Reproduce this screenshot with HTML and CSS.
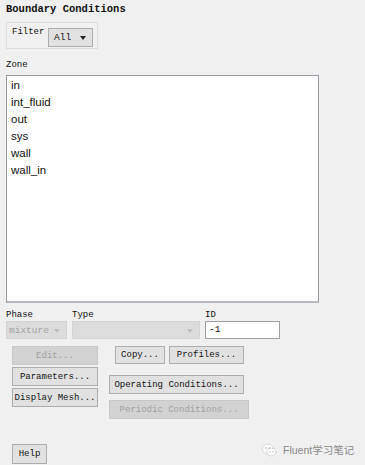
FILE: index.html
```html
<!DOCTYPE html>
<html lang="en">
<head>
    <meta charset="UTF-8">
    <title>Boundary Conditions</title>
    <link rel="stylesheet" href="styles.css">
</head>
<body>
    <div class="title">Boundary Conditions</div>

    <div class="filter-box">
        <span class="label">Filter</span>
        <div class="combo">All <span class="arrow"></span></div>
    </div>

    <div class="label zone-label">Zone</div>
    <div class="listbox">
        <div class="item">in</div>
        <div class="item">int_fluid</div>
        <div class="item">out</div>
        <div class="item">sys</div>
        <div class="item">wall</div>
        <div class="item">wall_in</div>
    </div>

    <div class="fields">
        <div class="field phase">
            <span class="label">Phase</span>
            <div class="combo disabled">mixture <span class="arrow"></span></div>
        </div>
        <div class="field type">
            <span class="label">Type</span>
            <div class="combo disabled"><span class="arrow"></span></div>
        </div>
        <div class="field id">
            <span class="label">ID</span>
            <div class="entry">-1</div>
        </div>
    </div>

    <div class="buttons">
        <div class="col-left">
            <button class="btn" disabled>Edit...</button>
            <button class="btn">Parameters...</button>
            <button class="btn">Display Mesh...</button>
        </div>
        <div class="col-mid">
            <div class="row">
                <button class="btn copy">Copy...</button>
                <button class="btn profiles">Profiles...</button>
            </div>
            <button class="btn operating">Operating Conditions...</button>
            <button class="btn periodic" disabled>Periodic Conditions...</button>
        </div>
    </div>

    <button class="btn help">Help</button>

    <div class="watermark">
        <svg width="15" height="14" viewBox="0 0 15 14">
            <ellipse cx="6" cy="6" rx="5.5" ry="4.8" fill="#fbfbfb" stroke="#c8c8c8" stroke-width="1" stroke-dasharray="1.5 1"/>
            <ellipse cx="9.5" cy="9" rx="4.6" ry="3.9" fill="#ffffff" stroke="#bdbdbd" stroke-width="1" stroke-dasharray="1.5 1"/>
            <circle cx="4" cy="5" r="0.8" fill="#b0b0b0"/>
            <circle cx="7.5" cy="5" r="0.8" fill="#b0b0b0"/>
            <circle cx="8" cy="8.6" r="0.6" fill="#b0b0b0"/>
            <circle cx="11" cy="8.6" r="0.6" fill="#b0b0b0"/>
        </svg>
        <span>Fluent学习笔记</span>
    </div>
</body>
</html>
```

FILE: styles.css
```css
* {
    box-sizing: border-box;
}
body {
    margin: 0;
    padding: 3px 0 0 6px;
    background-color: #f0f0f0;
    font-family: "Liberation Mono", "DejaVu Sans Mono", monospace;
    font-size: 9px;
    color: #111;
    position: relative;
    height: 465px;
    overflow: hidden;
}
.title {
    font-size: 10.5px;
    font-weight: bold;
    line-height: 12px;
}
.label {
    display: block;
    line-height: 12px;
}
.filter-box {
    display: flex;
    align-items: flex-start;
    width: 92px;
    height: 27px;
    margin-top: 7px;
    padding: 3px 0 0 5px;
    border: 1px solid #dcdcdc;
}
.filter-box .label {
    width: 36px;
}
.combo {
    position: relative;
    height: 19px;
    line-height: 18px;
    padding-left: 5px;
    background-color: #e1e1e1;
    border: 1px solid #adadad;
    font-size: 9.5px;
}
.filter-box .combo {
    width: 45px;
    margin-top: 2px;
}
.arrow {
    position: absolute;
    right: 6px;
    top: 7px;
    width: 0;
    height: 0;
    border-left: 3.5px solid transparent;
    border-right: 3.5px solid transparent;
    border-top: 4px solid #222;
}
.zone-label {
    margin-top: 10px;
}
.listbox {
    width: 313px;
    height: 228px;
    margin-top: 4px;
    padding: 1px 0 0 4px;
    background-color: #fff;
    border: 1px solid #9a9aa2;
    border-bottom: 2px solid #b8b8c0;
    font-family: "Liberation Sans", Arial, sans-serif;
    font-size: 11.5px;
}
.item {
    height: 17px;
    line-height: 17px;
}
.fields {
    display: flex;
    margin-top: 6px;
}
.field .label {
    height: 12px;
}
.combo.disabled {
    color: #a3a3a3;
    background-color: #dcdcdc;
    border-color: #d4d4d4;
    height: 18px;
    padding-left: 2px;
}
.combo.disabled .arrow {
    border-top-color: #bdbdbd;
}
.phase .combo {
    width: 61px;
}
.type {
    margin-left: 5px;
}
.type .combo {
    width: 128px;
}
.id {
    margin-left: 5px;
}
.entry {
    width: 75px;
    height: 18px;
    line-height: 16px;
    padding-left: 3px;
    background-color: #fff;
    border: 1px solid #a0a0a0;
    font-size: 9.5px;
}
.buttons {
    display: flex;
    margin-top: 7px;
    padding-left: 6px;
}
.col-left {
    display: flex;
    flex-direction: column;
    gap: 2px;
    width: 86px;
}
.col-mid {
    display: flex;
    flex-direction: column;
    align-items: flex-start;
    margin-left: 11px;
}
.row {
    display: flex;
    gap: 4px;
    margin-left: 6px;
}
.btn {
    height: 19px;
    padding: 0;
    font-family: "Liberation Mono", "DejaVu Sans Mono", monospace;
    font-size: 9px;
    color: #111;
    background-color: #e1e1e1;
    border: 1px solid #adadad;
    border-radius: 0;
}
.btn:disabled {
    color: #a0a0a0;
    background-color: #d2d2d2;
    border-color: #c8c8c8;
}
.col-left .btn {
    width: 86px;
}
.copy {
    width: 50px;
    height: 18px;
}
.profiles {
    width: 75px;
    height: 18px;
}
.operating {
    width: 135px;
    margin-top: 11px;
}
.periodic {
    width: 140px;
    margin-top: 6px;
}
.help {
    display: block;
    width: 35px;
    height: 20px;
    margin: 25px 0 0 6px;
}
.watermark {
    position: absolute;
    left: 262px;
    top: 442px;
    display: flex;
    align-items: center;
    gap: 6px;
    font-family: "Liberation Sans", "Noto Sans CJK SC", sans-serif;
    font-size: 10.5px;
    color: #8a8a8a;
}
```
